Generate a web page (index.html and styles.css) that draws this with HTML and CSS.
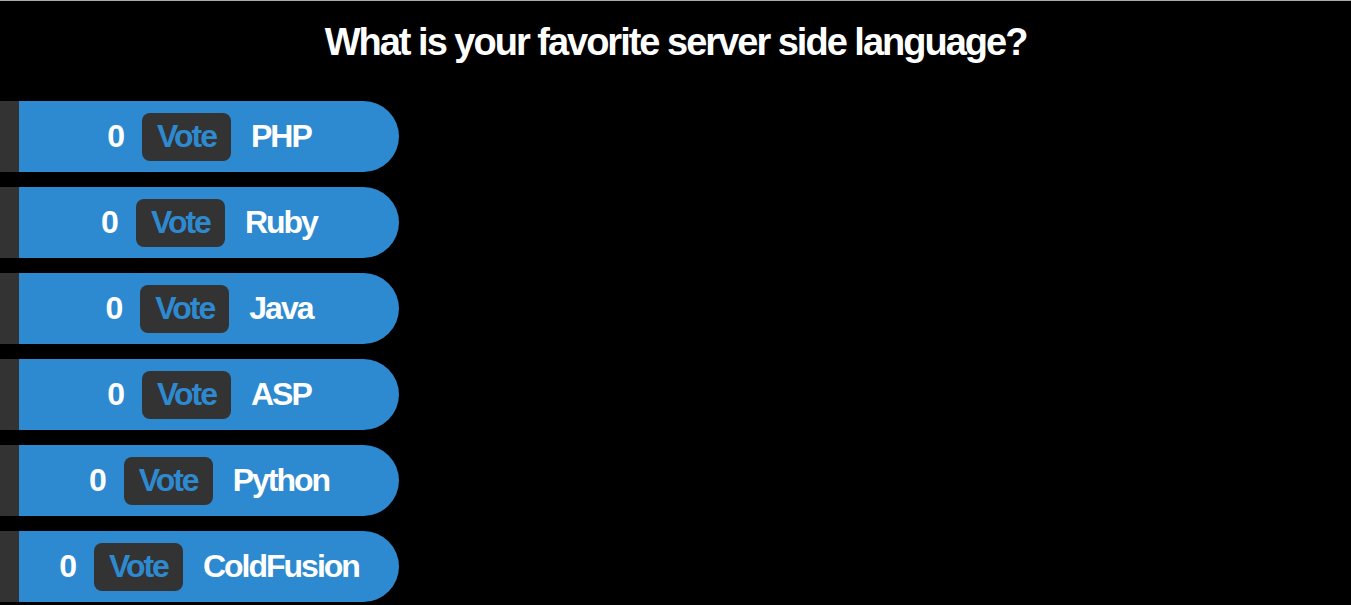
FILE: index.html
```html
<!DOCTYPE html>
<html>
<head>
<meta charset="utf-8">
<link rel="stylesheet" href="styles.css">
</head>
<body>
<div class="page">
  <h1 class="title">What is your favorite server side language?</h1>
  <div class="poll">
    <div class="option"><span class="count">0</span><button class="vote">Vote</button><span class="name">PHP</span></div>
    <div class="option"><span class="count">0</span><button class="vote">Vote</button><span class="name">Ruby</span></div>
    <div class="option"><span class="count">0</span><button class="vote">Vote</button><span class="name">Java</span></div>
    <div class="option"><span class="count">0</span><button class="vote">Vote</button><span class="name">ASP</span></div>
    <div class="option"><span class="count">0</span><button class="vote">Vote</button><span class="name">Python</span></div>
    <div class="option"><span class="count">0</span><button class="vote">Vote</button><span class="name">ColdFusion</span></div>
  </div>
</div>
</body>
</html>
```
FILE: styles.css
```css
html, body {
  margin: 0;
  padding: 0;
  background: #000;
}
body {
  border-top: 1px solid #aaa;
  font-family: "Liberation Sans", Arial, sans-serif;
  color: #fff;
}
.page {
  height: 604px;
  overflow: hidden;
}
.title {
  margin: 18px 0 0;
  height: 82px;
  text-align: center;
  font-size: 38px;
  font-weight: bold;
  letter-spacing: -2px;
  line-height: 46px;
}
.poll {
  display: flex;
  flex-direction: column;
  gap: 15px;
}
.option {
  width: 380px;
  height: 71px;
  border-left: 19px solid #333;
  background: #2e8ad0;
  border-radius: 0 36px 36px 0;
  display: flex;
  align-items: center;
  justify-content: center;
  font-size: 32px;
  font-weight: bold;
  letter-spacing: -2px;
}
.count {
  margin-right: 19px;
}
.vote {
  height: 48px;
  padding: 0 15px;
  border: none;
  border-radius: 8px;
  background: #333;
  color: #2e8ad0;
  font-family: "Liberation Sans", Arial, sans-serif;
  font-size: 32px;
  font-weight: bold;
  letter-spacing: -2px;
  margin-right: 20px;
}
```
